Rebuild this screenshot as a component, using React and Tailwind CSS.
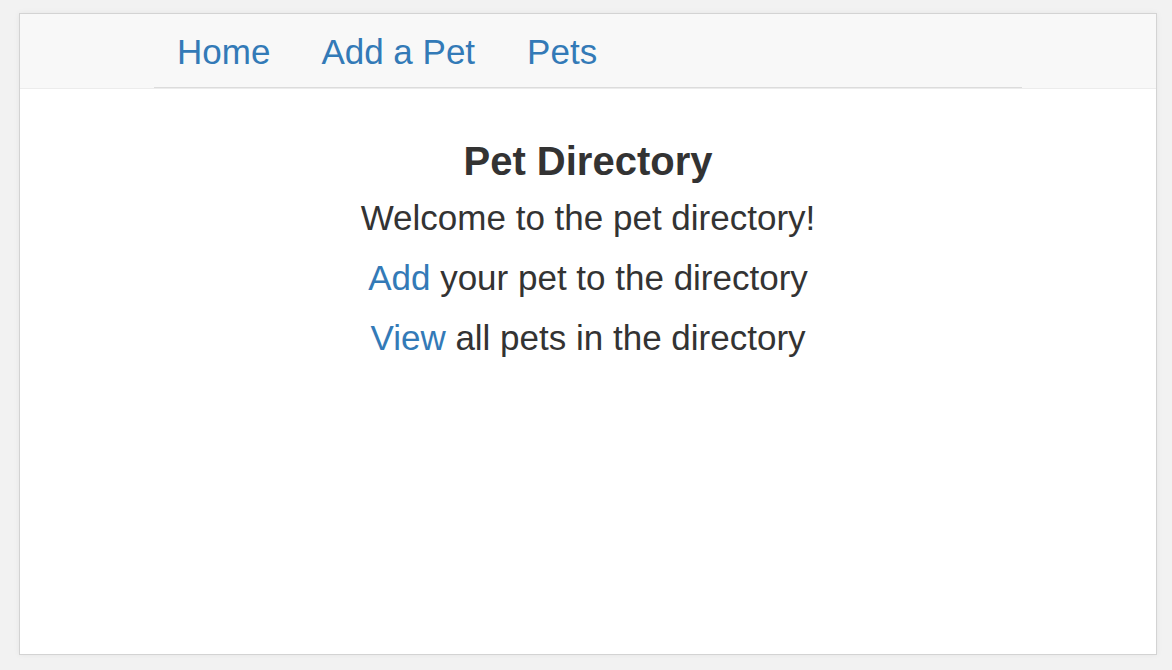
export default function App() {
  return (
    <div className="h-[670px] w-[1172px] overflow-hidden bg-[#f2f2f2] pt-[13px] pl-[19px]" style={{ fontFamily: '"Liberation Sans", Arial, sans-serif' }}>
      <div className="w-[1138px] h-[642px] border border-[#d3d3d3] bg-white shadow-[0_0_6px_rgba(0,0,0,0.06)]">
        <nav className="h-[75px] bg-[#f8f8f8] border-b border-[#ececec]">
          <div className="mx-auto w-[868px] h-[74px] border-b border-[#dcdcdc] flex items-center pt-[2px] text-[35px] leading-[35px] text-[#337ab7]">
            <a href="#" className="ml-[23px]">Home</a>
            <a href="#" className="ml-[51px]">Add a Pet</a>
            <a href="#" className="ml-[52px]">Pets</a>
          </div>
        </nav>

        <div className="pt-[50px] text-center text-[#333333]">
          <h3 className="text-[40px] leading-[44px] font-bold mb-[10px]">Pet Directory</h3>
          <p className="text-[35px] leading-[50px] mb-[10px]">Welcome to the pet directory!</p>
          <p className="text-[35px] leading-[50px] mb-[10px]">
            <a href="#" className="text-[#337ab7]">Add</a> your pet to the directory
          </p>
          <p className="text-[35px] leading-[50px] mb-[10px]">
            <a href="#" className="text-[#337ab7]">View</a> all pets in the directory
          </p>
        </div>
      </div>
    </div>
  );
}
